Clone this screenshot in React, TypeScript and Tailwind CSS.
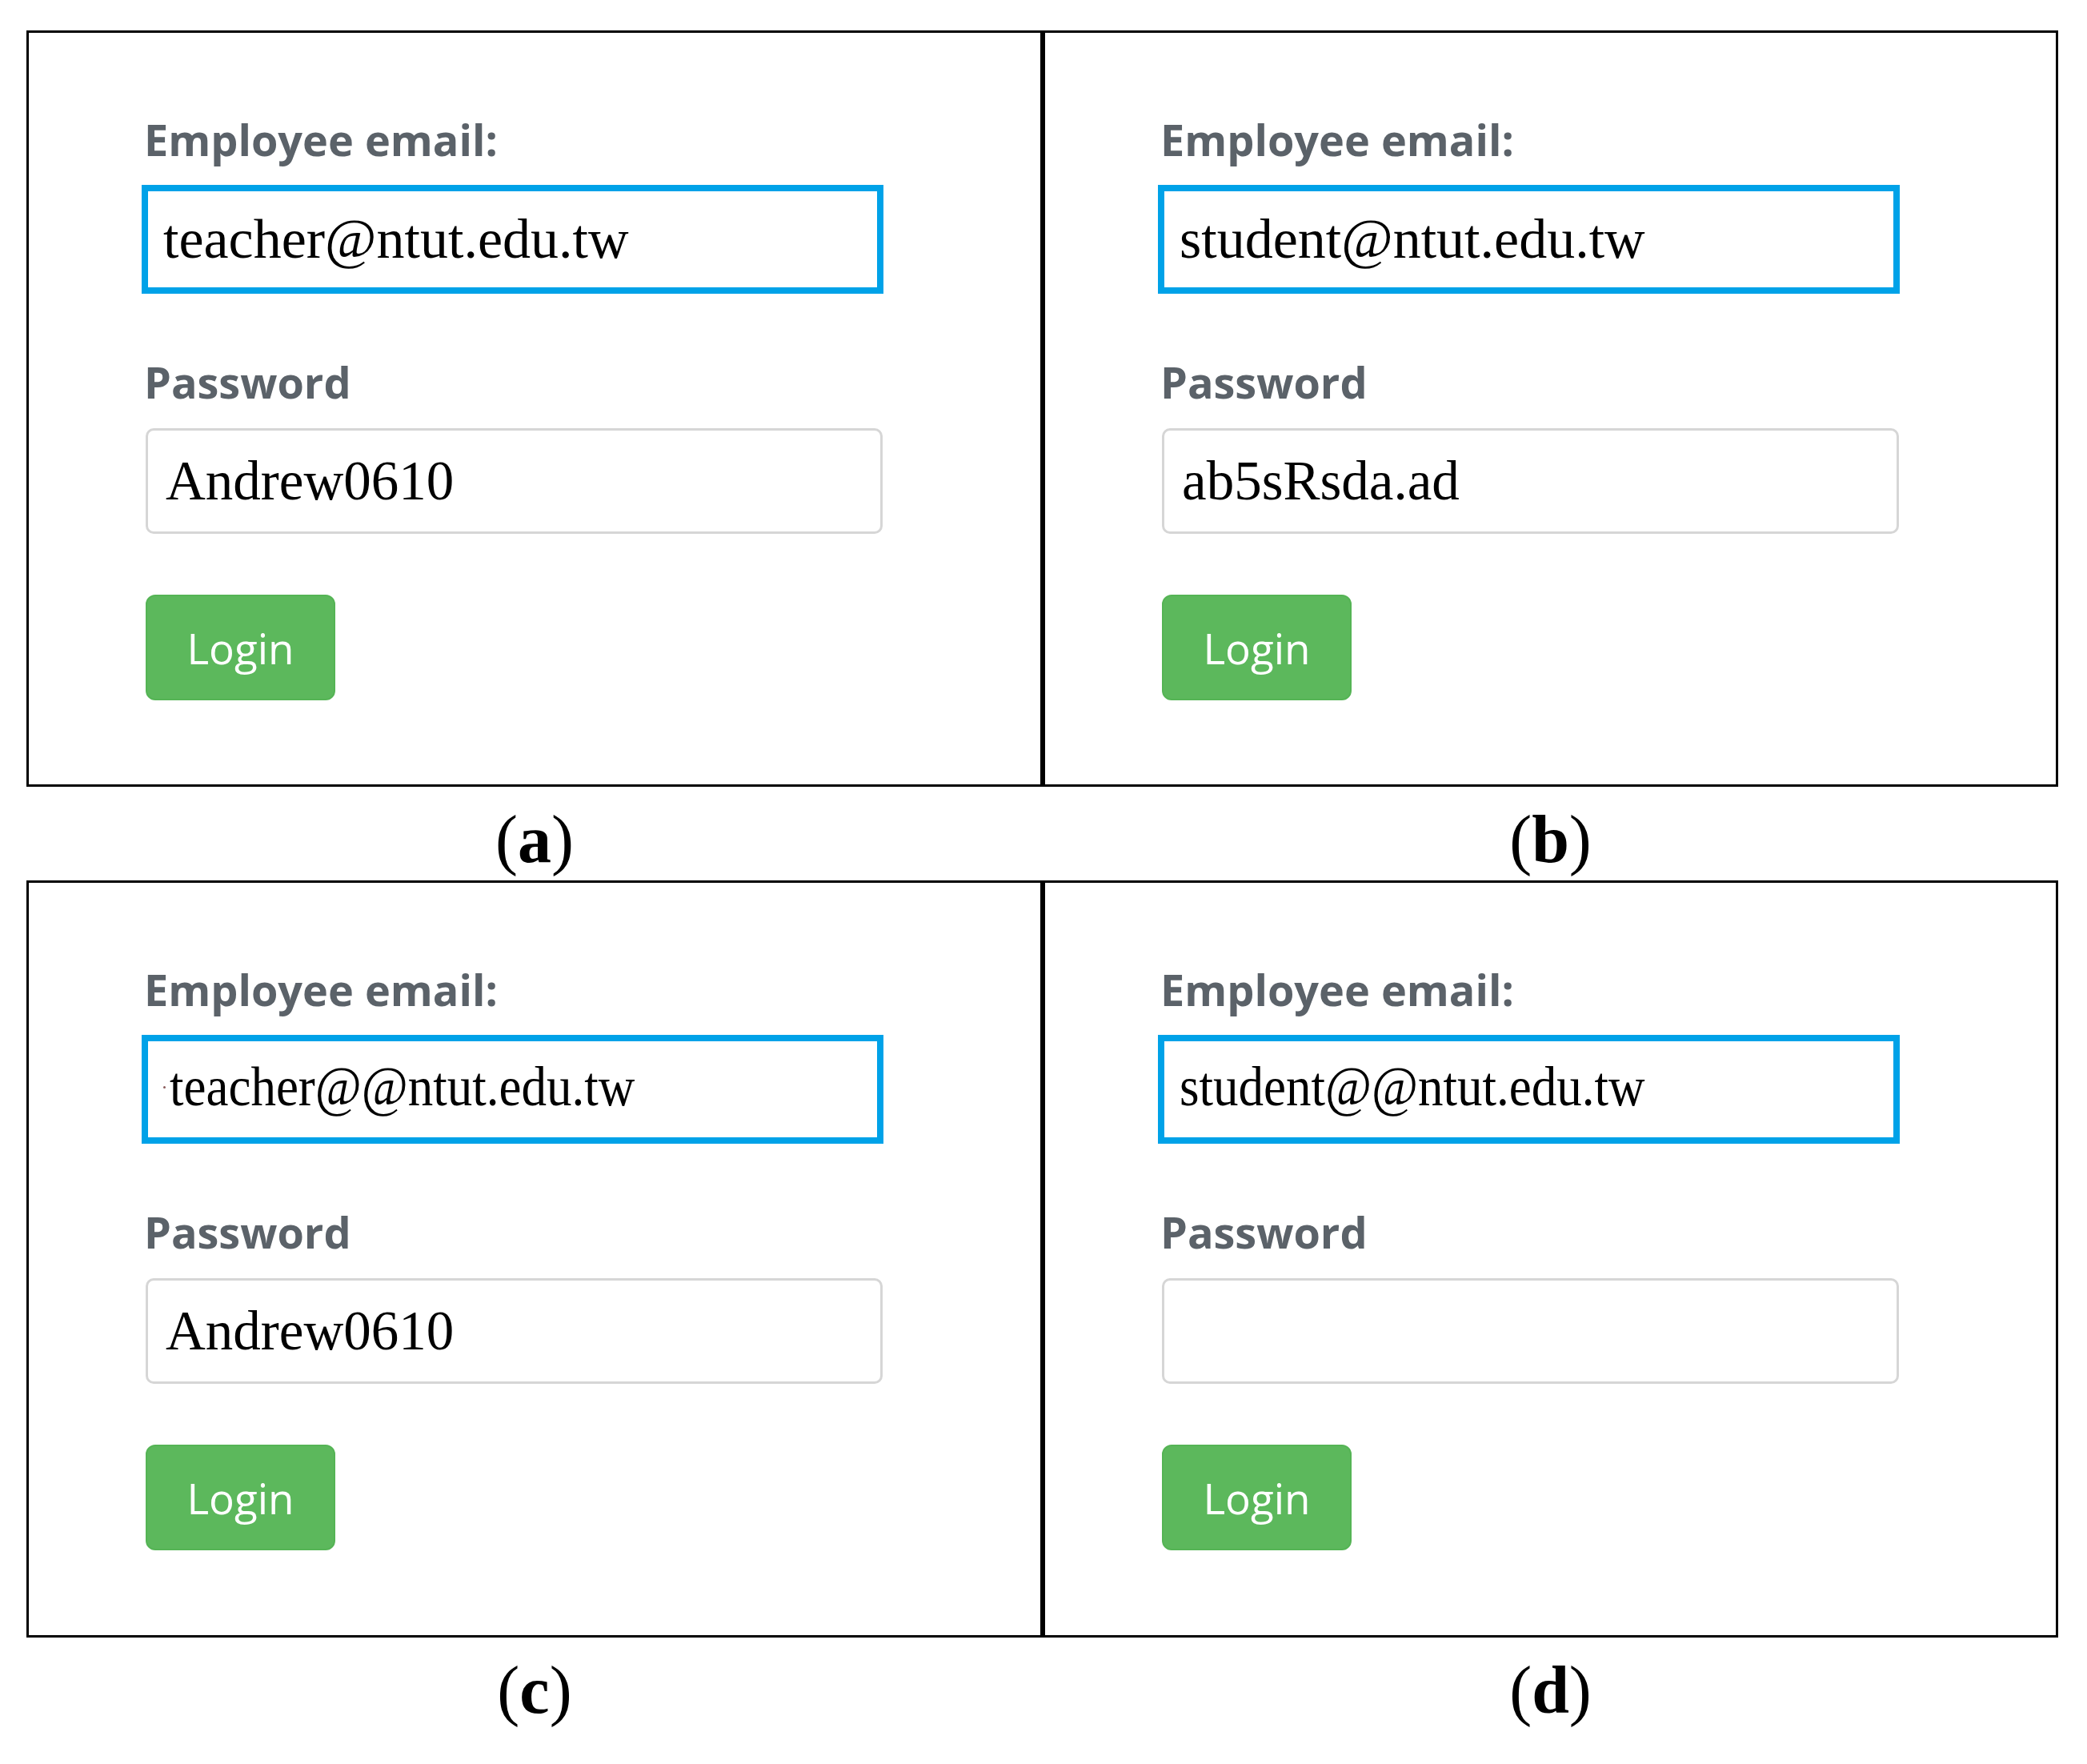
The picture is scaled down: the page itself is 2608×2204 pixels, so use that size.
type PanelData = {
  email: string;
  password: string;
  stray?: boolean;
  squeezed?: boolean;
};

const rows: { height: string; panels: [PanelData, PanelData]; captions: [string, string] }[] = [
  {
    height: "h-[945px]",
    panels: [
      { email: "teacher@ntut.edu.tw", password: "Andrew0610" },
      { email: "student@ntut.edu.tw", password: "ab5sRsda.ad" },
    ],
    captions: ["a", "b"],
  },
  {
    height: "h-[946px]",
    panels: [
      { email: "teacher@@ntut.edu.tw", password: "Andrew0610", stray: true, squeezed: true },
      { email: "student@@ntut.edu.tw", password: "", squeezed: true },
    ],
    captions: ["c", "d"],
  },
];

function LoginPanel({
  data,
  width,
  height,
}: {
  data: PanelData;
  width: string;
  height: string;
}) {
  return (
    <div className={`${width} ${height} border-[3px] border-black bg-white pl-[141px] pt-[96px]`}>
      <p className="ml-[3px] font-['Open_Sans',sans-serif] text-[54px] font-bold leading-[74px] text-[#5b6269]">
        Employee email:
      </p>
      <div className="mt-[20px] flex h-[136px] w-[927px] items-center border-[8px] border-[#00a2e8] pl-[19px]">
        {data.stray && (
          <span className="mr-[5px] mb-[6px] inline-block h-[3px] w-[3px] shrink-0 rounded-full bg-[#8a5a5a]" />
        )}
        <span
          className={`whitespace-nowrap font-['Liberation_Serif',serif] text-[70px] leading-[78px] text-black ${
            data.squeezed ? "-translate-y-[3px] origin-left scale-x-[0.9]" : ""
          }`}
        >
          {data.email}
        </span>
      </div>
      <p className="mt-[73px] ml-[3px] font-['Open_Sans',sans-serif] text-[54px] font-bold leading-[74px] text-[#5b6269]">
        Password
      </p>
      <div className="mt-[21px] ml-[5px] flex h-[132px] w-[921px] items-center rounded-[10px] border-[3px] border-[#d6d6d6] pl-[22px]">
        <span className="font-['Liberation_Serif',serif] text-[69px] leading-[78px] text-black">
          {data.password}
        </span>
      </div>
      <button
        type="button"
        className="mt-[76px] ml-[5px] block h-[132px] w-[237px] rounded-[12px] border-2 border-[#55b455] bg-[#5cb85c] font-['Open_Sans',sans-serif] text-[53px] leading-none text-white"
      >
        Login
      </button>
    </div>
  );
}

function Caption({ letter, width }: { letter: string; width: string }) {
  return (
    <div
      className={`${width} pt-[21px] text-center font-['Liberation_Serif',serif] text-[84px] leading-[90px] text-black`}
    >
      (<span className="font-bold">{letter}</span>)
    </div>
  );
}

export default function App() {
  return (
    <div className="h-[2204px] w-[2608px] bg-white pl-[33px] pt-[38px]">
      {rows.map((row) => (
        <div key={row.captions[0]}>
          <div className="flex">
            <LoginPanel data={row.panels[0]} width="w-[1270px]" height={row.height} />
            <LoginPanel data={row.panels[1]} width="w-[1269px]" height={row.height} />
          </div>
          <div className="flex h-[117px]">
            <Caption letter={row.captions[0]} width="w-[1270px]" />
            <Caption letter={row.captions[1]} width="w-[1269px]" />
          </div>
        </div>
      ))}
    </div>
  );
}
